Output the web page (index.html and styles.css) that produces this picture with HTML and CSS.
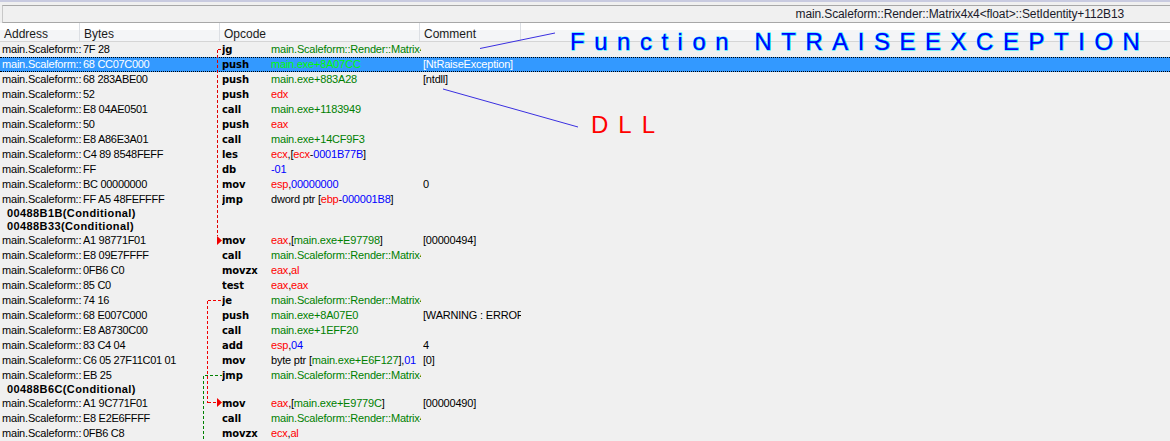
FILE: index.html
```html
<!DOCTYPE html>
<html>
<head>
<meta charset="utf-8">
<title>Disassembly</title>
<link rel="stylesheet" href="styles.css">
</head>
<body>
<div class="app">
  <div class="topstrip"></div>
  <div class="infobox">main.Scaleform::Render::Matrix4x4&lt;float&gt;::SetIdentity+112B13</div>
  <div class="header">
    <div class="hcell h-addr">Address</div>
    <div class="hcell h-bytes">Bytes</div>
    <div class="hcell h-op">Opcode</div>
    <div class="hcell h-com">Comment</div>
  </div>
  <div class="rows">
    <div class="row"><span class="addr">main.Scaleform::</span><span class="bytes">7F 28</span><span class="mn">jg</span><span class="args g">main.Scaleform::Render::Matrix4x4</span><span class="com"></span></div>
    <div class="row sel"><span class="addr">main.Scaleform::</span><span class="bytes">68 CC07C000</span><span class="mn">push</span><span class="args g">main.exe+8A07CC</span><span class="com">[NtRaiseException]</span></div>
    <div class="row"><span class="addr">main.Scaleform::</span><span class="bytes">68 283ABE00</span><span class="mn">push</span><span class="args g">main.exe+883A28</span><span class="com">[ntdll]</span></div>
    <div class="row"><span class="addr">main.Scaleform::</span><span class="bytes">52</span><span class="mn">push</span><span class="args r">edx</span><span class="com"></span></div>
    <div class="row"><span class="addr">main.Scaleform::</span><span class="bytes">E8 04AE0501</span><span class="mn">call</span><span class="args g">main.exe+1183949</span><span class="com"></span></div>
    <div class="row"><span class="addr">main.Scaleform::</span><span class="bytes">50</span><span class="mn">push</span><span class="args r">eax</span><span class="com"></span></div>
    <div class="row"><span class="addr">main.Scaleform::</span><span class="bytes">E8 A86E3A01</span><span class="mn">call</span><span class="args g">main.exe+14CF9F3</span><span class="com"></span></div>
    <div class="row"><span class="addr">main.Scaleform::</span><span class="bytes">C4 89 8548FEFF</span><span class="mn">les</span><span class="args"><span class="r">ecx</span>,[<span class="r">ecx</span>-<span class="b">0001B77B</span>]</span><span class="com"></span></div>
    <div class="row"><span class="addr">main.Scaleform::</span><span class="bytes">FF</span><span class="mn">db</span><span class="args b">-01</span><span class="com"></span></div>
    <div class="row"><span class="addr">main.Scaleform::</span><span class="bytes">BC 00000000</span><span class="mn">mov</span><span class="args"><span class="r">esp</span>,<span class="b">00000000</span></span><span class="com">0</span></div>
    <div class="row"><span class="addr">main.Scaleform::</span><span class="bytes">FF A5 48FEFFFF</span><span class="mn">jmp</span><span class="args">dword ptr [<span class="r">ebp</span>-<span class="b">000001B8</span>]</span><span class="com"></span></div>
    <div class="label">00488B1B(Conditional)</div>
    <div class="label">00488B33(Conditional)</div>
    <div class="row"><span class="addr">main.Scaleform::</span><span class="bytes">A1 98771F01</span><span class="mn">mov</span><span class="args"><span class="r">eax</span>,[<span class="g">main.exe+E97798</span>]</span><span class="com">[00000494]</span></div>
    <div class="row"><span class="addr">main.Scaleform::</span><span class="bytes">E8 09E7FFFF</span><span class="mn">call</span><span class="args g">main.Scaleform::Render::Matrix4x4</span><span class="com"></span></div>
    <div class="row"><span class="addr">main.Scaleform::</span><span class="bytes">0FB6 C0</span><span class="mn">movzx</span><span class="args"><span class="r">eax</span>,<span class="r">al</span></span><span class="com"></span></div>
    <div class="row"><span class="addr">main.Scaleform::</span><span class="bytes">85 C0</span><span class="mn">test</span><span class="args"><span class="r">eax</span>,<span class="r">eax</span></span><span class="com"></span></div>
    <div class="row"><span class="addr">main.Scaleform::</span><span class="bytes">74 16</span><span class="mn">je</span><span class="args g">main.Scaleform::Render::Matrix4x4</span><span class="com"></span></div>
    <div class="row"><span class="addr">main.Scaleform::</span><span class="bytes">68 E007C000</span><span class="mn">push</span><span class="args g">main.exe+8A07E0</span><span class="com">[WARNING : ERROR</span></div>
    <div class="row"><span class="addr">main.Scaleform::</span><span class="bytes">E8 A8730C00</span><span class="mn">call</span><span class="args g">main.exe+1EFF20</span><span class="com"></span></div>
    <div class="row"><span class="addr">main.Scaleform::</span><span class="bytes">83 C4 04</span><span class="mn">add</span><span class="args"><span class="r">esp</span>,<span class="b">04</span></span><span class="com">4</span></div>
    <div class="row"><span class="addr">main.Scaleform::</span><span class="bytes">C6 05 27F11C01 01</span><span class="mn">mov</span><span class="args">byte ptr [<span class="g">main.exe+E6F127</span>],<span class="b">01</span></span><span class="com">[0]</span></div>
    <div class="row"><span class="addr">main.Scaleform::</span><span class="bytes">EB 25</span><span class="mn">jmp</span><span class="args g">main.Scaleform::Render::Matrix4x4</span><span class="com"></span></div>
    <div class="label">00488B6C(Conditional)</div>
    <div class="row"><span class="addr">main.Scaleform::</span><span class="bytes">A1 9C771F01</span><span class="mn">mov</span><span class="args"><span class="r">eax</span>,[<span class="g">main.exe+E9779C</span>]</span><span class="com">[00000490]</span></div>
    <div class="row"><span class="addr">main.Scaleform::</span><span class="bytes">E8 E2E6FFFF</span><span class="mn">call</span><span class="args g">main.Scaleform::Render::Matrix4x4</span><span class="com"></span></div>
    <div class="row"><span class="addr">main.Scaleform::</span><span class="bytes">0FB6 C8</span><span class="mn">movzx</span><span class="args"><span class="r">ecx</span>,<span class="r">al</span></span><span class="com"></span></div>
  </div>
  <svg class="overlay" width="1170" height="441" viewBox="0 0 1170 441">
    <g fill="none" stroke-width="1" stroke-dasharray="3 2" shape-rendering="crispEdges">
      <path d="M217.500 49.500V236M217.500 49.500H222" stroke="#e00000"/>
      <path d="M207.500 300.500V402.500M207.500 300.500H222M207.500 402.500H217" stroke="#f00000"/>
      <path d="M203.500 375.500V441" stroke="#008000"/>
      <path d="M205 375.500H222" stroke="#008000"/>
    </g>
    <path d="M217 236V245L222 240.500Z" fill="#f00000"/>
    <path d="M217 398V407L222 402.500Z" fill="#f00000"/>
    <path d="M480 48.500L555 33" stroke="#3a2fe0" stroke-width="1" fill="none"/>
    <path d="M443 89L578 127" stroke="#3a2fe0" stroke-width="1" fill="none"/>
    <text class="anno-fn" x="570" y="50">Function NTRAISEEXCEPTION</text>
    <text class="anno-dll" x="591" y="133">DLL</text>
  </svg>
</div>
</body>
</html>
```
FILE: styles.css
```css
* { box-sizing: border-box; }
html, body { margin: 0; padding: 0; }
body { width: 1170px; height: 441px; overflow: hidden; background: #f0f0f0; }
.app {
  position: relative;
  width: 1170px;
  height: 441px;
  overflow: hidden;
  font-family: "Liberation Sans", Arial, sans-serif;
  font-size: 11px;
  color: #000;
}
.topstrip { height: 5px; background: #f0f0f0; border-top: 2px solid #c9cbe0; }
.infobox {
  height: 18px;
  margin-left: 2px;
  padding-right: 46px;
  border-top: 1px solid #a8a8a8;
  border-left: 1px solid #c8c8c8;
  border-bottom: 1px solid #a8a8a8;
  background: #f0f0f0;
  line-height: 16px;
  font-size: 12px;
  letter-spacing: -0.12px;
  text-align: right;
  color: #1a1a2a;
}
.header {
  display: flex;
  height: 19px;
  background: linear-gradient(#ffffff 0, #ffffff 37%, #f4f5f7 37%, #f4f5f7 100%);
  border-bottom: 1px solid #d5d5d5;
}
.hcell {
  padding: 5px 0 0 4px;
  line-height: 12px;
  font-size: 12px;
  color: #1a1a1a;
  border-right: 1px solid #dcdfe4;
}
.h-addr { width: 80px; }
.h-bytes { width: 140px; }
.h-op { width: 200px; }
.h-com { width: 101px; }
.row {
  display: flex;
  height: 15px;
  line-height: 15px;
  white-space: nowrap;
  letter-spacing: -0.2px;
}
.row > span { display: block; overflow: hidden; }
.addr { width: 83px; padding-left: 2px; }
.bytes { width: 139px; letter-spacing: -0.3px; }
.mn {
  width: 49px;
  font-family: "DejaVu Sans", sans-serif;
  font-weight: 700;
  font-size: 10px;
  letter-spacing: -0.1px;
}
.args { width: 150px; }
.com { width: 98px; margin-left: 2px; }
.g { color: #008000; }
.r { color: #ff0000; }
.b { color: #0000ff; }
.sel {
  background: #3399ff;
  color: #fff;
  border-top: 1px dotted #000;
  border-bottom: 1px dotted #000;
  line-height: 13px;
}
.sel .g { color: #00ff00; }
.sel .mn { color: #000; }
.sel .addr, .sel .bytes, .sel .com { color: #fff; }
.label {
  height: 13px;
  line-height: 13px;
  padding-left: 7px;
  font-weight: 700;
  font-size: 11px;
  letter-spacing: 0.4px;
  white-space: nowrap;
}
.overlay { position: absolute; left: 0; top: 0; }
.anno-fn {
  font-family: "Liberation Sans", Arial, sans-serif;
  font-size: 24px;
  letter-spacing: 9.52px;
  fill: #0000ff;
  stroke: #00e8ff;
  stroke-width: 1.2px;
  paint-order: stroke;
}
.anno-dll {
  font-family: "Liberation Sans", Arial, sans-serif;
  font-size: 24px;
  letter-spacing: 10px;
  fill: #ff0000;
}
```
